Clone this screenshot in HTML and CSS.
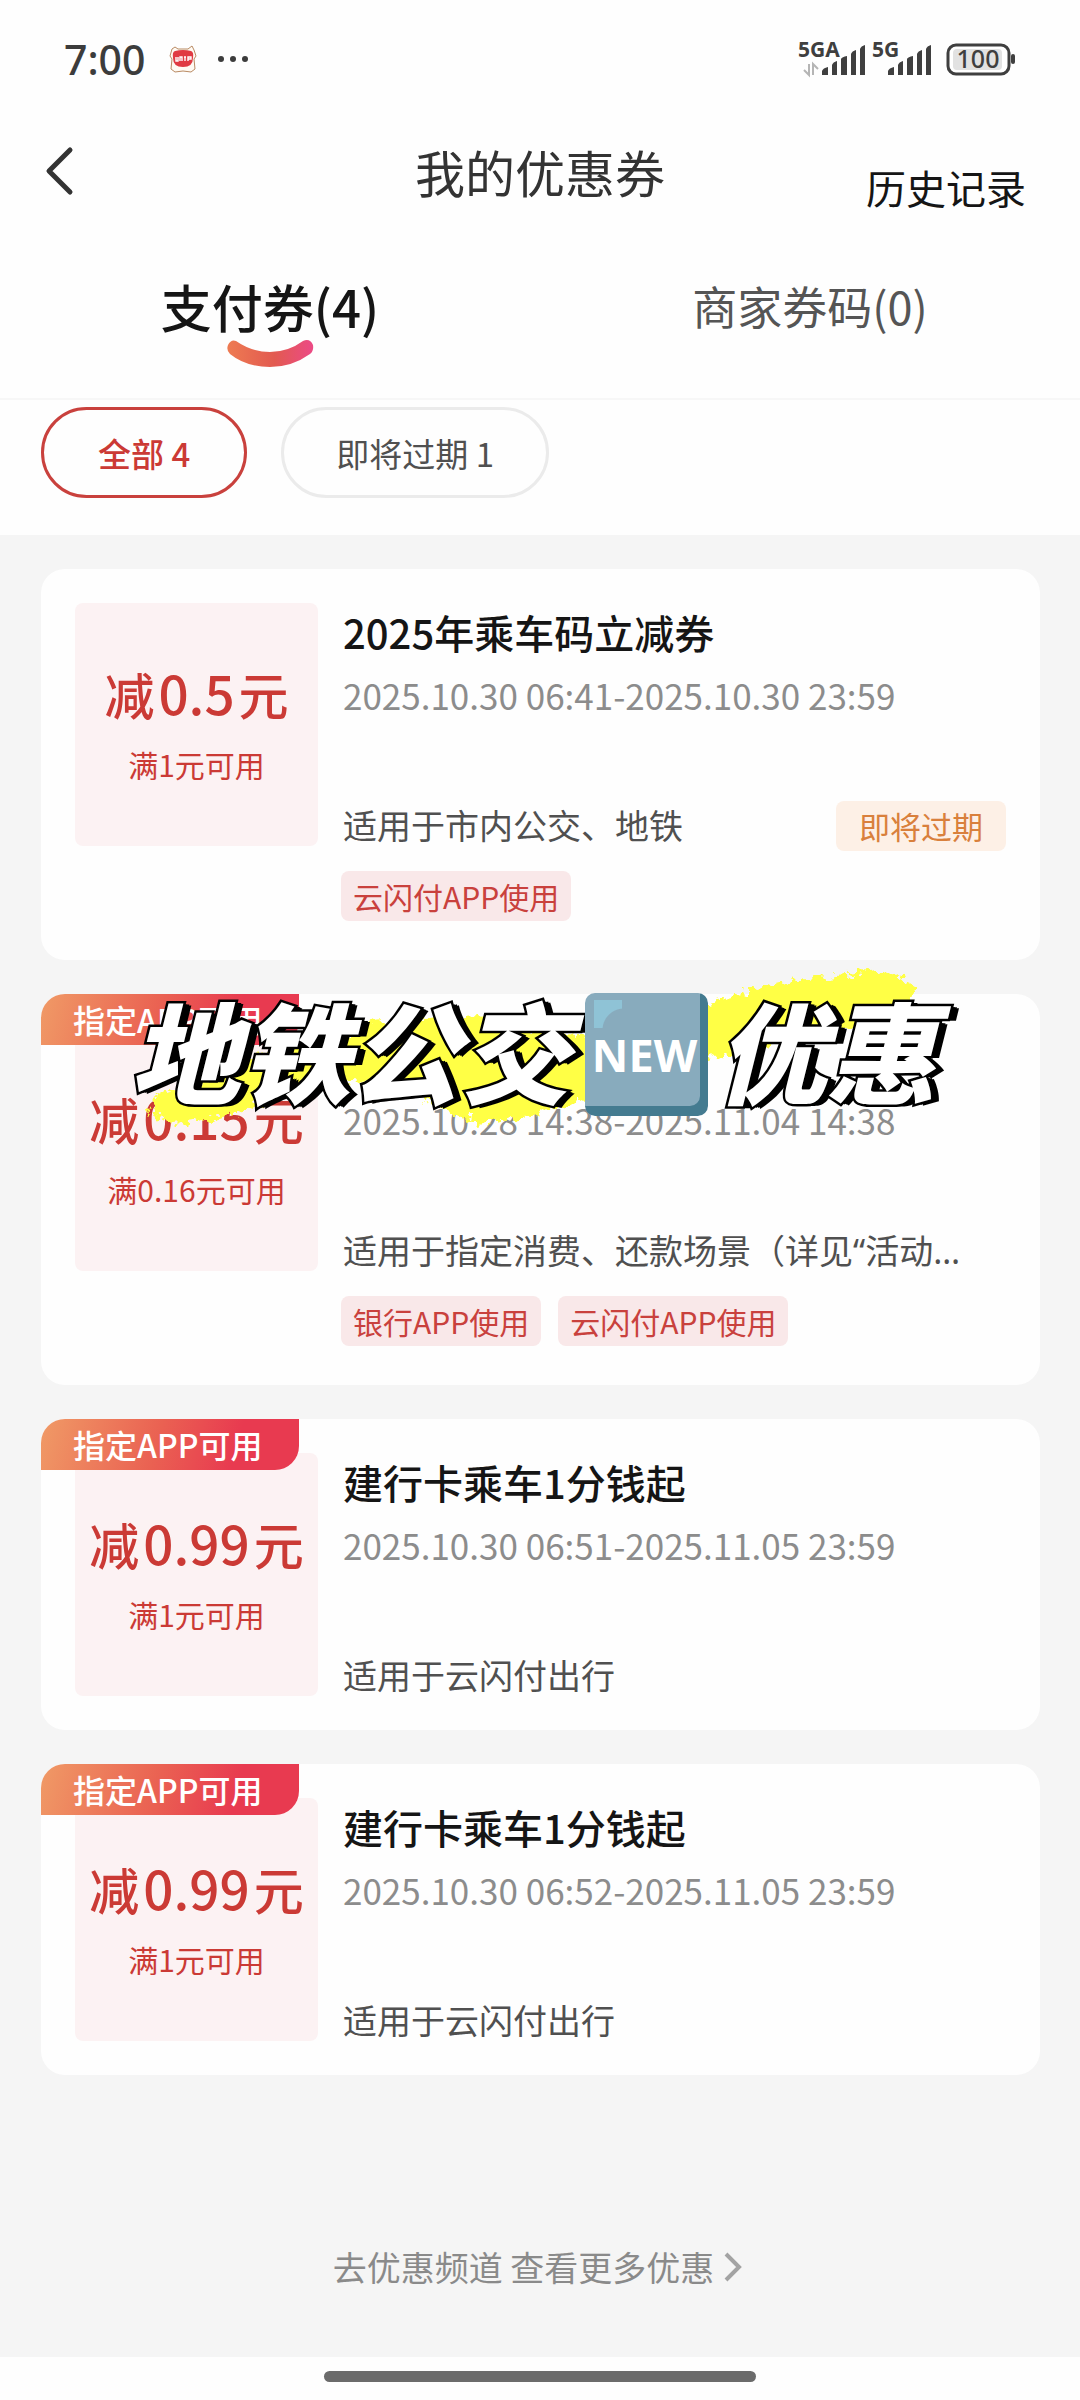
FILE: index.html
```html
<!DOCTYPE html>
<html lang="zh-CN">
<head>
<meta charset="utf-8">
<meta name="viewport" content="width=device-width, initial-scale=1">
<title>我的优惠券</title>
<link rel="stylesheet" href="styles.css">
</head>
<body>
<div class="status">
  <div class="status-side">
    <span class="clock">7:00</span>
    <svg class="mascot" width="28" height="28" viewBox="0 0 28 28" aria-hidden="true">
      <path d="M3 4L6 2L9 4H19L23 1L25 5L27 11L25 14L26 24L22 27L14 26L6 27L2 24L3 14L1 11Z" fill="#fffaf3" stroke="#b98a63" stroke-width="1"/>
      <path d="M6 6Q14 4 22 6Q25 7 24 13Q24 22 14 22Q4 22 4 13Q3 7 6 6Z" fill="#e03a42"/>
      <path d="M7 12V16H9V12M11 16V12H13V16M15 12H17M16 12V16M19 16V12H22V14H19" fill="none" stroke="#fff" stroke-width="1.4"/>
    </svg>
    <svg width="32" height="8" viewBox="0 0 32 8" aria-hidden="true">
      <g fill="#3c3c3c"><circle cx="4" cy="4" r="3"/><circle cx="16" cy="4" r="3"/><circle cx="28" cy="4" r="3"/></g>
    </svg>
  </div>
  <svg class="signals" width="218" height="56" viewBox="0 -11 218 56" role="img" aria-label="5GA 5G 100">
    <g fill="#3f3f3f">
      <text class="net" x="0" y="15">5GA</text>
      <text class="net" x="74" y="15">5G</text>
      <path d="M24 33V29Q25 26 30 25V33ZM34 33V23Q35 20 39 19V33ZM43 33V17Q44 15 49 14V33ZM53 33V12Q54 9 58 8V33ZM62 33V7Q63 4 67 3V33Z"/>
      <path d="M90 33V29Q91 26 96 25V33ZM100 33V23Q101 20 105 19V33ZM109 33V17Q110 15 115 14V33ZM119 33V12Q120 9 124 8V33ZM128 33V7Q129 4 133 3V33Z"/>
      <rect x="213" y="12" width="4" height="10" rx="2"/>
    </g>
    <path d="M11 22V33L6 28M15 33V22L20 27" fill="none" stroke="#b5b5b5" stroke-width="2"/>
    <rect x="150" y="3" width="61" height="29" rx="8" fill="#fff" stroke="#3f3f3f" stroke-width="3"/>
    <rect x="155" y="7" width="49" height="21" rx="4" fill="#e2e2e2"/>
    <text class="level" x="180" y="26" text-anchor="middle" fill="#3f3f3f">100</text>
  </svg>
</div>

<header class="header">
  <button class="back" type="button" aria-label="返回">
    <svg width="30" height="50" viewBox="0 0 30 50" aria-hidden="true"><path d="M25 4L4 25L25 46" fill="none" stroke="#333" stroke-width="5" stroke-linecap="round" stroke-linejoin="round"/></svg>
  </button>
  <h1 class="title">我的优惠券</h1>
  <a class="history" href="#history">历史记录</a>
</header>

<nav class="tabs">
  <a class="tab tab-active" href="#pay">支付券(4)
    <svg class="smile" width="88" height="28" viewBox="0 0 88 28" aria-hidden="true">
      <defs><linearGradient id="smile"><stop offset="0" stop-color="#ee7b52"/><stop offset=".55" stop-color="#e25a50"/><stop offset="1" stop-color="#ec4a86"/></linearGradient></defs>
      <path d="M10 1Q26 12 44 12Q62 12 77 1Q84 -2 87 5Q88 11 84 14Q66 27 44 27Q20 27 4 14Q0 10 2 5Q5 -1 10 1Z" fill="url(#smile)"/>
    </svg>
  </a>
  <a class="tab" href="#shop">商家券码(0)</a>
</nav>

<div class="filters">
  <button class="pill pill-active" type="button">全部 4</button>
  <button class="pill" type="button">即将过期 1</button>
</div>

<main class="list">
  <article class="card">
    <div class="amount"><p class="value">减<span class="num">0.5</span>元</p><p class="limit">满1元可用</p></div>
    <div class="info">
      <h2 class="name">2025年乘车码立减券</h2>
      <p class="date">2025.10.30 06:41-2025.10.30 23:59</p>
      <div class="scope"><p class="desc">适用于市内公交、地铁</p><span class="soon">即将过期</span></div>
      <div class="tags"><span class="tag">云闪付APP使用</span></div>
    </div>
  </article>

  <article class="card">
    <span class="ribbon">指定APP可用</span>
    <div class="amount"><p class="value">减<span class="num">0.15</span>元</p><p class="limit">满0.16元可用</p></div>
    <div class="info info-untitled">
      <p class="date">2025.10.28 14:38-2025.11.04 14:38</p>
      <div class="scope"><p class="desc">适用于指定消费、还款场景（详见“活动…</p></div>
      <div class="tags"><span class="tag">银行APP使用</span><span class="tag">云闪付APP使用</span></div>
    </div>
    <div class="sticker">
      <svg class="brush" width="800" height="180" viewBox="130 955 800 180" aria-hidden="true">
        <defs><filter id="rough" x="-5%" y="-10%" width="110%" height="120%"><feTurbulence type="fractalNoise" baseFrequency=".12" numOctaves="3" seed="4"/><feDisplacementMap in="SourceGraphic" scale="18" xChannelSelector="R" yChannelSelector="G"/></filter></defs>
        <path filter="url(#rough)" fill="#ffff45" d="M155 1095L148 1114L175 1124L235 1114L270 1100L350 1082L400 1084L440 1108L480 1124L520 1118L590 1100L712 1058L800 1038L905 1016L915 998L906 978L885 970L800 979L710 1002L590 1037L510 1030L480 1016L370 1022L355 1035L260 1055L200 1080Z"/>
      </svg>
      <span class="sticker-text">地铁公交</span>
      <span class="sticker-new">NEW</span>
      <span class="sticker-text">优惠</span>
    </div>
  </article>

  <article class="card">
    <span class="ribbon">指定APP可用</span>
    <div class="amount"><p class="value">减<span class="num">0.99</span>元</p><p class="limit">满1元可用</p></div>
    <div class="info">
      <h2 class="name">建行卡乘车1分钱起</h2>
      <p class="date">2025.10.30 06:51-2025.11.05 23:59</p>
      <div class="scope"><p class="desc">适用于云闪付出行</p></div>
    </div>
  </article>

  <article class="card">
    <span class="ribbon">指定APP可用</span>
    <div class="amount"><p class="value">减<span class="num">0.99</span>元</p><p class="limit">满1元可用</p></div>
    <div class="info">
      <h2 class="name">建行卡乘车1分钱起</h2>
      <p class="date">2025.10.30 06:52-2025.11.05 23:59</p>
      <div class="scope"><p class="desc">适用于云闪付出行</p></div>
    </div>
  </article>

  <a class="more" href="#more">去优惠频道 查看更多优惠
    <svg width="18" height="32" viewBox="0 0 18 32" aria-hidden="true"><path d="M2 3L15 16L2 29" fill="none" stroke="#a3a3a3" stroke-width="4"/></svg>
  </a>
</main>
<div class="home"><span class="home-bar"></span></div>
</body>
</html>
```

FILE: styles.css
```css
* {
  box-sizing: border-box;
  margin: 0;
  padding: 0;
}

body {
  display: flex;
  flex-direction: column;
  min-height: 100vh;
  background: #fefefe;
  color: #333;
  font-family: "Noto Sans CJK SC", sans-serif;
}

a {
  color: inherit;
  text-decoration: none;
}

button {
  border: 0;
  background: none;
  color: inherit;
  font-family: inherit;
}

svg {
  flex: none;
}

/* Status bar */
.status {
  display: flex;
  align-items: center;
  justify-content: space-between;
  height: 118px;
  padding: 0 64px;
}

.status-side {
  display: flex;
  align-items: center;
}

.clock {
  color: #3c3c3c;
  font: 500 41px/60px "Noto Sans", sans-serif;
}

.mascot {
  margin: 0 20px 0 23px;
}

.net {
  font: 700 21px "Noto Sans", sans-serif;
}

.level {
  font: 500 25px "Noto Sans", sans-serif;
}

/* Header */
.header {
  display: grid;
  grid-template-columns: 1fr auto 1fr;
  align-items: center;
  height: 106px;
  padding: 0 45px;
}

.back {
  justify-self: start;
  height: 50px;
}

.title {
  font-size: 50px;
  font-weight: 400;
  line-height: 70px;
}

.history {
  align-self: end;
  justify-self: end;
  padding-right: 9px;
  color: #151515;
  font-size: 40px;
  line-height: 74px;
}

/* Tabs */
.tabs {
  display: flex;
  height: 176px;
  padding-top: 48px;
  border-bottom: 2px solid #f7f7f7;
}

.tab {
  display: flex;
  flex: 1;
  flex-direction: column;
  align-items: center;
  color: #555;
  font-size: 45px;
  line-height: 68px;
}

.tab-active {
  color: #151515;
  font-size: 51px;
  font-weight: 500;
}

/* Filters */
.filters {
  display: flex;
  gap: 34px;
  padding: 7px 41px 37px;
}

.pill {
  height: 91px;
  padding: 0 52px;
  border: 3px solid #ebebeb;
  border-radius: 46px;
  color: #505050;
  font-size: 33px;
}

.pill-active {
  padding: 0 54px;
  border-color: #c9413d;
  color: #cb3a35;
  font-weight: 500;
}

/* Coupon list */
.list {
  display: flex;
  flex: 1;
  flex-direction: column;
  gap: 34px;
  padding: 34px 40px 66px 41px;
  background: #f5f5f5;
}

.card {
  position: relative;
  display: flex;
  align-items: flex-start;
  gap: 25px;
  padding: 34px;
  border-radius: 24px;
  background: #fefefe;
}

.amount {
  display: flex;
  flex: none;
  flex-direction: column;
  align-items: center;
  width: 243px;
  height: 243px;
  padding-top: 54px;
  border-radius: 8px;
  background: #fcf2f3;
  color: #cb3a35;
}

.value {
  font-size: 50px;
  font-weight: 500;
  line-height: 72px;
}

.num {
  margin: 0 4px;
  font-size: 53px;
  line-height: 1;
}

.limit {
  margin-top: 13px;
  font-size: 30px;
  line-height: 44px;
}

.info {
  flex: 1;
  min-width: 0;
}

.info-untitled {
  padding-top: 58px;
}

.name {
  color: #151515;
  font-size: 40px;
  font-weight: 500;
  line-height: 58px;
}

.date {
  margin-top: 10px;
  color: #8c8c8c;
  font-size: 35px;
  line-height: 48px;
}

.scope {
  display: flex;
  align-items: center;
  justify-content: space-between;
  height: 40px;
  margin-top: 87px;
}

.desc {
  color: #505050;
  font-family: "Noto Sans", "Noto Sans CJK SC", sans-serif;
  font-size: 34px;
  line-height: 40px;
  white-space: nowrap;
}

.soon {
  padding: 0 23px;
  border-radius: 8px;
  background: #fdf0e6;
  color: #d9803c;
  font-size: 31px;
  line-height: 50px;
}

.tags {
  display: flex;
  gap: 17px;
  margin: 25px 0 5px -2px;
}

.tag {
  padding: 0 12px;
  border-radius: 8px;
  background: #f9e8e9;
  color: #c9413d;
  font-size: 30px;
  line-height: 50px;
}

.ribbon {
  position: absolute;
  top: 0;
  left: 0;
  padding: 0 37px 0 32px;
  border-radius: 24px 0 24px 0;
  background: linear-gradient(105deg, #f09a66, #ea6152 45%, #e83a50 75%);
  color: #fff;
  font-size: 32px;
  font-weight: 500;
  line-height: 51px;
}

/* Caption laid over the second coupon */
.sticker {
  position: absolute;
  top: 0;
  left: 89px;
  display: flex;
  align-items: center;
  height: 120px;
}

.brush {
  position: absolute;
  top: -39px;
  left: 0;
}

.sticker-text {
  position: relative;
  padding-bottom: 12px;
  color: #fff;
  font-size: 110px;
  font-style: italic;
  font-weight: 900;
  line-height: 120px;
  white-space: nowrap;
  -webkit-text-stroke: 5px #000;
  paint-order: stroke fill;
  text-shadow: 2px 0 #000, 4px 1px #000, 6px 1px #000, 8px 2px #000;
}

.sticker-new {
  position: relative;
  width: 123px;
  height: 123px;
  margin: 0 8px 0 15px;
  padding-right: 4px;
  border-radius: 10px;
  background: radial-gradient(circle at 30px 30px, transparent 21px, #8fc3d6 22px) 9px 7px / 28px 28px no-repeat, #88abbd;
  box-shadow: inset -8px -10px #447b90;
  color: #fff;
  font: 700 45px/123px "Noto Sans", sans-serif;
  text-align: center;
}

.more {
  display: flex;
  align-items: center;
  justify-content: center;
  gap: 10px;
  margin-top: 134px;
  padding-right: 6px;
  color: #8a8a8a;
  font-size: 34px;
  line-height: 48px;
}

/* Gesture bar */
.home {
  display: flex;
  justify-content: center;
  height: 43px;
  padding-top: 14px;
}

.home-bar {
  width: 40%;
  height: 11px;
  border-radius: 6px;
  background: #6b6b6b;
}
```
